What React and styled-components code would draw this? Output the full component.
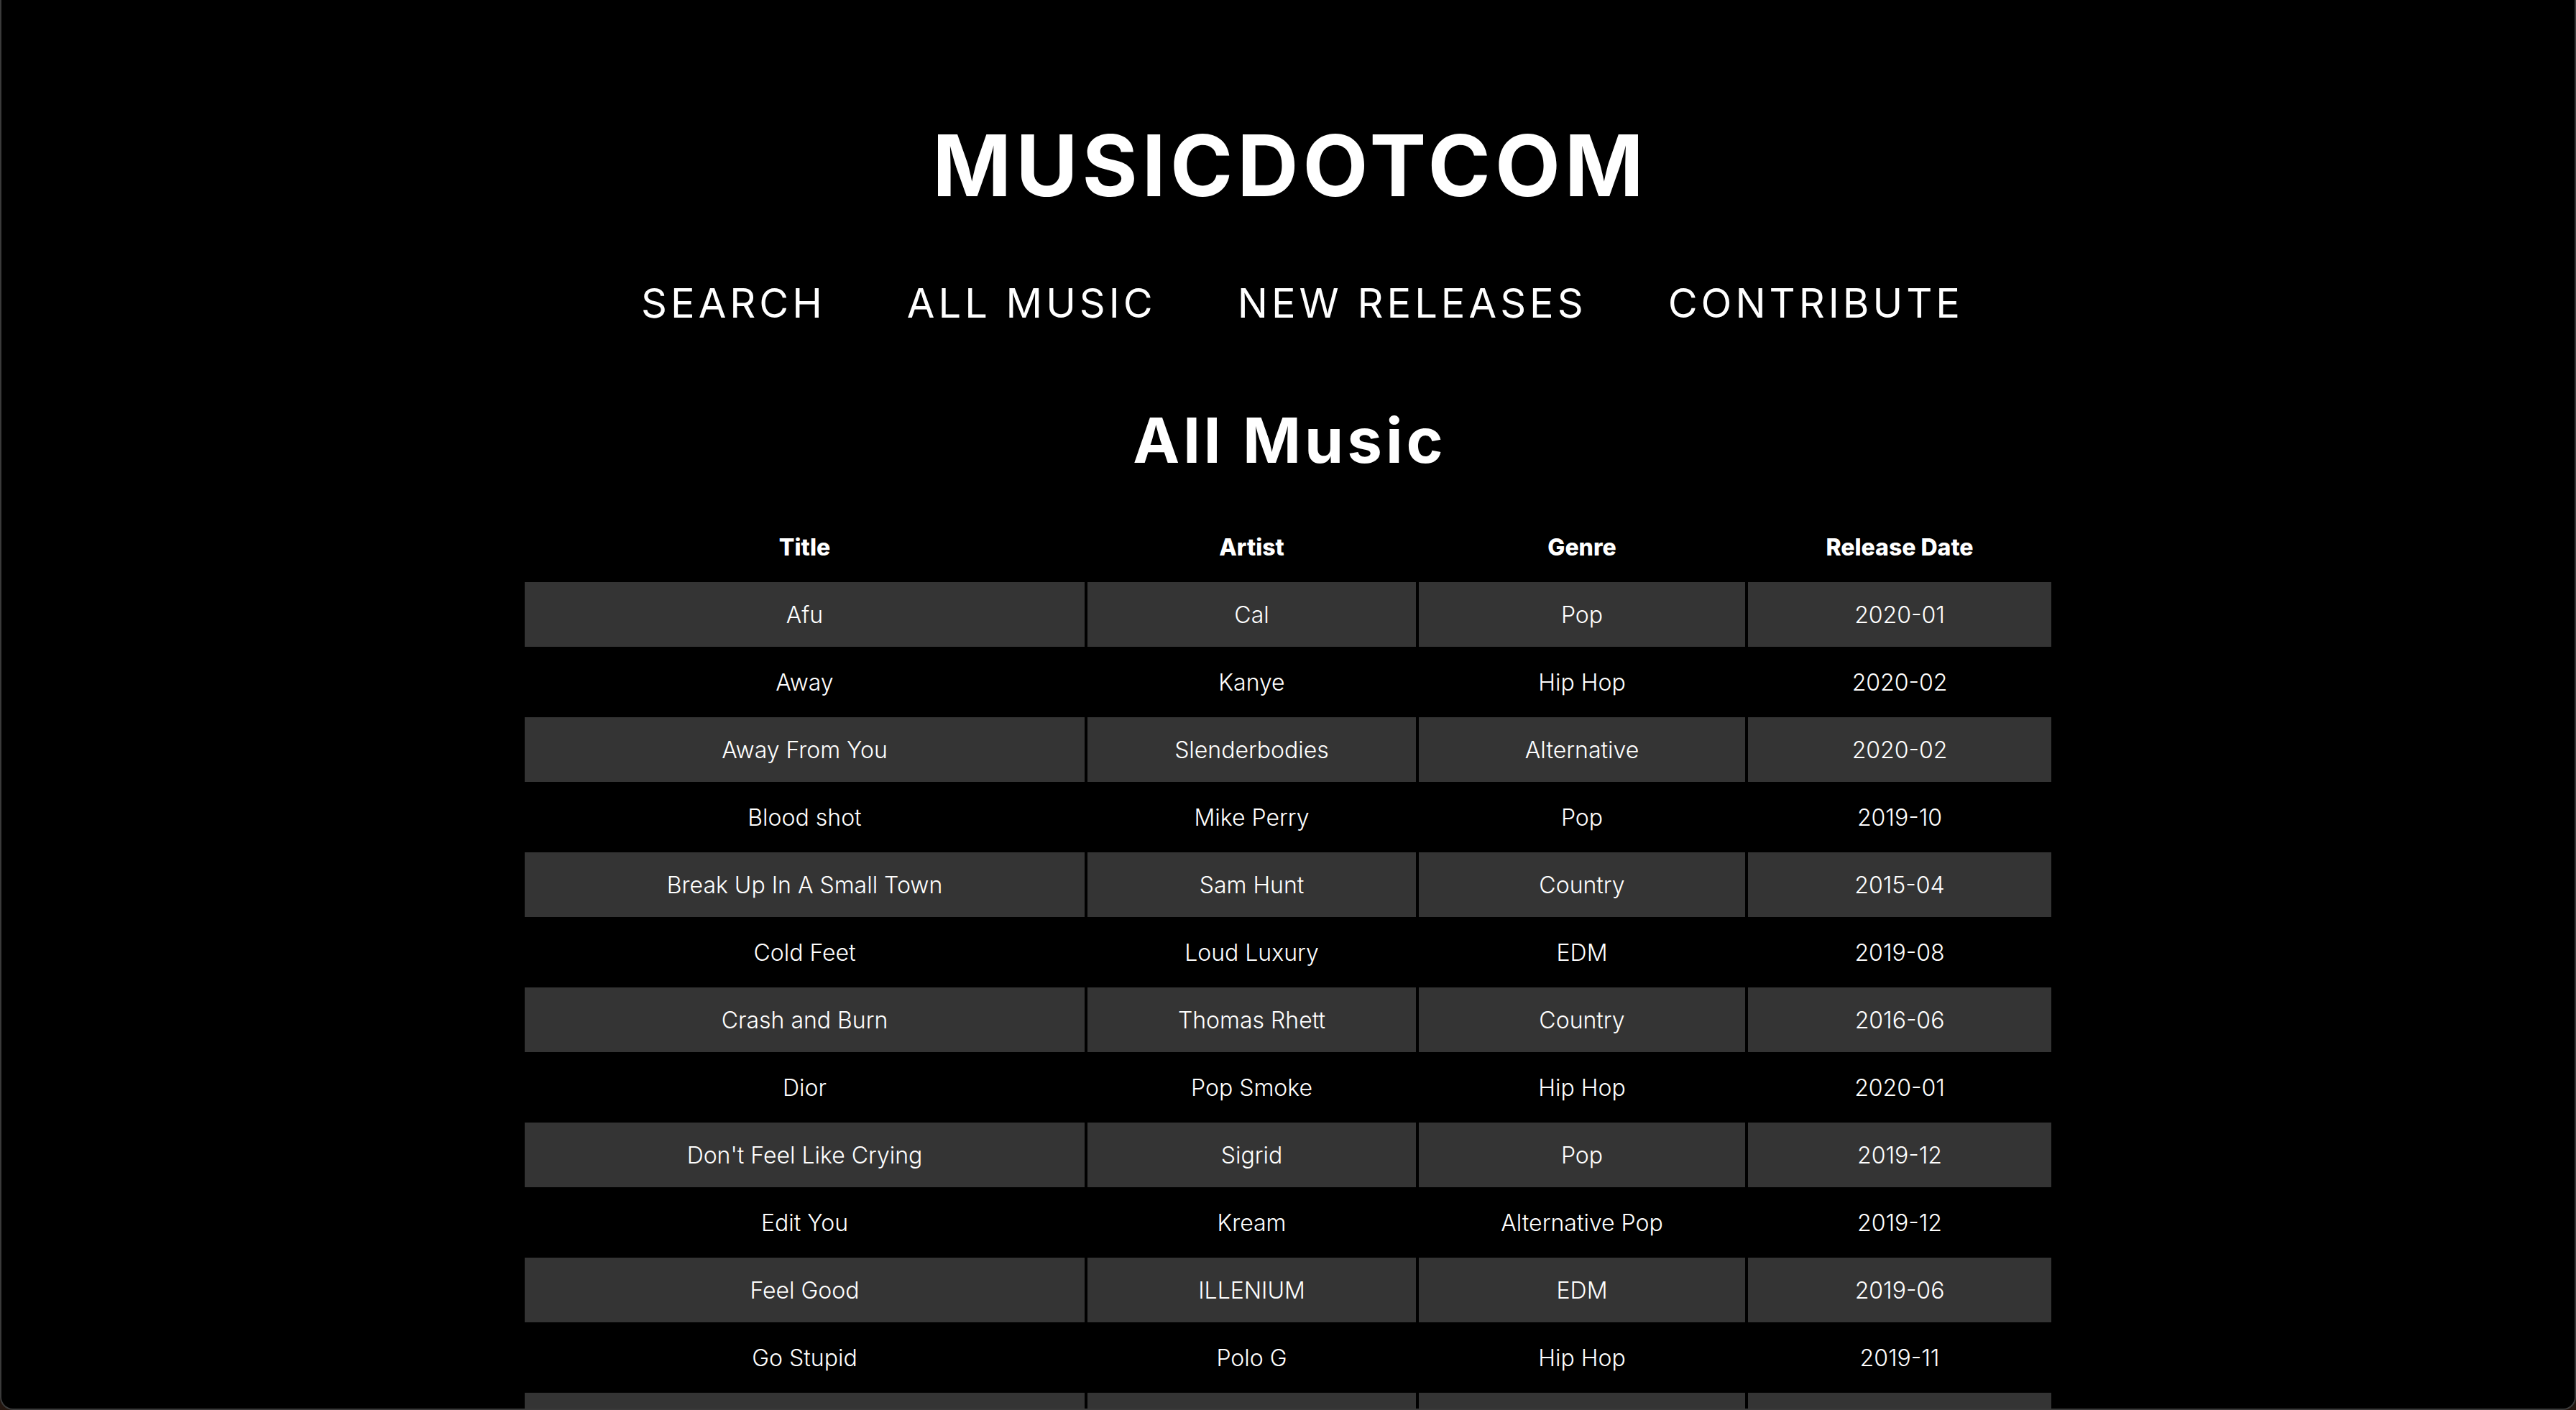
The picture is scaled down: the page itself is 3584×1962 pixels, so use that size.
import React from "react";
import styled, { createGlobalStyle } from "styled-components";

const GlobalStyle = createGlobalStyle`
  html, body {
    margin: 0;
    padding: 0;
    background: #24160f;
  }
  body {
    font-family: Inter, "DejaVu Sans", sans-serif;
    color: #ffffff;
  }
  * { box-sizing: border-box; }
`;

const Window = styled.div`
  width: 100%;
  height: 100vh;
  background: #000000;
  border: 2px solid #3a3a3a;
  border-top: none;
  border-radius: 0 0 18px 18px;
  overflow: hidden;
  display: flex;
  flex-direction: column;
  align-items: center;
  padding-top: 171px;
`;

const Brand = styled.h1`
  margin: 0;
  padding-left: 6px;
  font-family: Inter, "DejaVu Sans", sans-serif;
  font-weight: 700;
  font-size: 118px;
  line-height: 1;
  letter-spacing: 6px;
  text-transform: uppercase;
`;

const Nav = styled.ul`
  list-style: none;
  margin: 105px 0 0;
  padding: 0 0 0 40px;
  display: flex;
  gap: 113px;
`;

const NavItem = styled.li`
  font-family: Inter, "DejaVu Sans", sans-serif;
  font-weight: 400;
  font-size: 56px;
  line-height: 1;
  letter-spacing: 5px;
  color: #ffffff;
`;

const Heading = styled.h2`
  margin: 119px 0 0;
  padding-left: 5px;
  font-family: Inter, "DejaVu Sans", sans-serif;
  font-weight: 700;
  font-size: 87px;
  line-height: 1;
  letter-spacing: 5px;
`;

const Table = styled.table`
  margin-top: 56px;
  border-collapse: separate;
  border-spacing: 4px;
  table-layout: fixed;
  width: 2132px;
  font-family: Inter, "DejaVu Sans", sans-serif;
`;

const HeadCell = styled.th`
  height: 90px;
  padding: 0;
  font-size: 32px;
  font-weight: 800;
  text-align: center;
  vertical-align: middle;
  color: #ffffff;
`;

const Cell = styled.td`
  height: 90px;
  padding: 0;
  font-size: 32px;
  font-weight: 300;
  text-align: center;
  vertical-align: middle;
  color: #ffffff;
  background: ${(p) => (p.$striped ? "#343434" : "transparent")};
`;

const columns = [
  { label: "Title", width: 779 },
  { label: "Artist", width: 457 },
  { label: "Genre", width: 454 },
  { label: "Release Date", width: 422 },
];

const songs = [
  ["Afu", "Cal", "Pop", "2020-01"],
  ["Away", "Kanye", "Hip Hop", "2020-02"],
  ["Away From You", "Slenderbodies", "Alternative", "2020-02"],
  ["Blood shot", "Mike Perry", "Pop", "2019-10"],
  ["Break Up In A Small Town", "Sam Hunt", "Country", "2015-04"],
  ["Cold Feet", "Loud Luxury", "EDM", "2019-08"],
  ["Crash and Burn", "Thomas Rhett", "Country", "2016-06"],
  ["Dior", "Pop Smoke", "Hip Hop", "2020-01"],
  ["Don't Feel Like Crying", "Sigrid", "Pop", "2019-12"],
  ["Edit You", "Kream", "Alternative Pop", "2019-12"],
  ["Feel Good", "ILLENIUM", "EDM", "2019-06"],
  ["Go Stupid", "Polo G", "Hip Hop", "2019-11"],
  ["Good News", "Mac Miller", "Alternative", "2020-01"],
  ["Hate Me", "Ellie Goulding", "Pop", "2019-06"],
];

export default function App() {
  return (
    <>
      <GlobalStyle />
      <Window>
        <Brand>MUSICDOTCOM</Brand>
        <Nav>
          <NavItem>SEARCH</NavItem>
          <NavItem>ALL MUSIC</NavItem>
          <NavItem>NEW RELEASES</NavItem>
          <NavItem>CONTRIBUTE</NavItem>
        </Nav>
        <Heading>All Music</Heading>
        <Table>
          <colgroup>
            {columns.map((c) => (
              <col key={c.label} style={{ width: c.width }} />
            ))}
          </colgroup>
          <thead>
            <tr>
              {columns.map((c) => (
                <HeadCell key={c.label}>{c.label}</HeadCell>
              ))}
            </tr>
          </thead>
          <tbody>
            {songs.map((row, i) => (
              <tr key={row[0]}>
                {row.map((v, j) => (
                  <Cell key={j} $striped={i % 2 === 0}>
                    {v}
                  </Cell>
                ))}
              </tr>
            ))}
          </tbody>
        </Table>
      </Window>
    </>
  );
}
